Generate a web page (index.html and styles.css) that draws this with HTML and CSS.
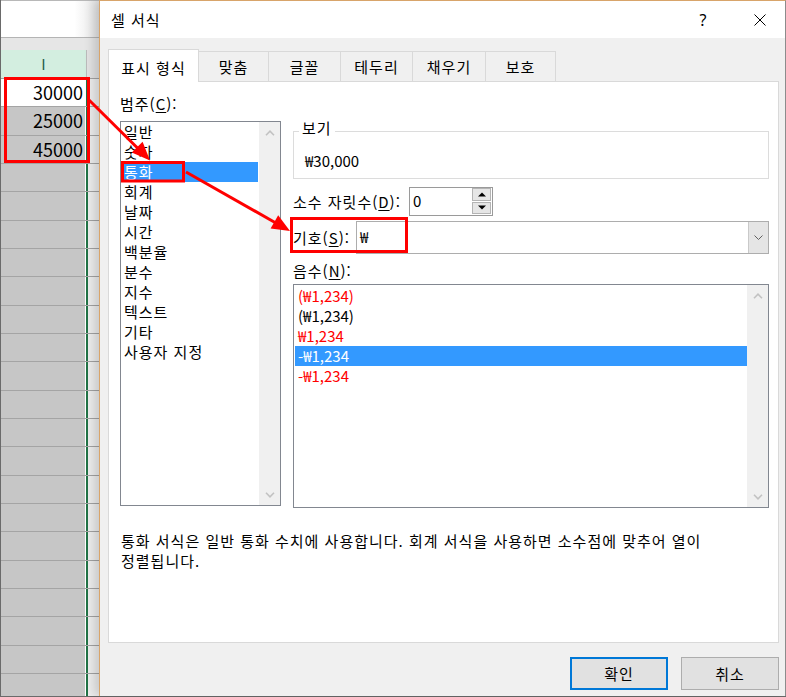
FILE: index.html
```html
<!DOCTYPE html>
<html lang="ko">
<head>
<meta charset="utf-8">
<title>셀 서식</title>
<link rel="stylesheet" href="styles.css">
</head>
<body>
<div class="screen">
  <div class="sheet">
    <div class="sheet-top"></div>
    <div class="sheet-bar"></div>
    <div class="sheet-row head"><div class="cell">I</div><div class="strip"></div></div>
    <div class="sheet-row first"><div class="cell">30000</div><div class="gap"></div><div class="strip"></div></div>
    <div class="sheet-row"><div class="cell">25000</div><div class="gap"></div><div class="strip"></div></div>
    <div class="sheet-row"><div class="cell">45000</div><div class="gap"></div><div class="strip"></div></div>
    <div class="sheet-row"><div class="cell"></div><div class="gap"></div><div class="strip"></div></div>
    <div class="sheet-row"><div class="cell"></div><div class="gap"></div><div class="strip"></div></div>
    <div class="sheet-row"><div class="cell"></div><div class="gap"></div><div class="strip"></div></div>
    <div class="sheet-row"><div class="cell"></div><div class="gap"></div><div class="strip"></div></div>
    <div class="sheet-row"><div class="cell"></div><div class="gap"></div><div class="strip"></div></div>
    <div class="sheet-row"><div class="cell"></div><div class="gap"></div><div class="strip"></div></div>
    <div class="sheet-row"><div class="cell"></div><div class="gap"></div><div class="strip"></div></div>
    <div class="sheet-row"><div class="cell"></div><div class="gap"></div><div class="strip"></div></div>
    <div class="sheet-row"><div class="cell"></div><div class="gap"></div><div class="strip"></div></div>
    <div class="sheet-row"><div class="cell"></div><div class="gap"></div><div class="strip"></div></div>
    <div class="sheet-row"><div class="cell"></div><div class="gap"></div><div class="strip"></div></div>
    <div class="sheet-row"><div class="cell"></div><div class="gap"></div><div class="strip"></div></div>
    <div class="sheet-row"><div class="cell"></div><div class="gap"></div><div class="strip"></div></div>
    <div class="sheet-row"><div class="cell"></div><div class="gap"></div><div class="strip"></div></div>
    <div class="sheet-row"><div class="cell"></div><div class="gap"></div><div class="strip"></div></div>
    <div class="sheet-row"><div class="cell"></div><div class="gap"></div><div class="strip"></div></div>
    <div class="sheet-row"><div class="cell"></div><div class="gap"></div><div class="strip"></div></div>
    <div class="sheet-row"><div class="cell"></div><div class="gap"></div><div class="strip"></div></div>
    <div class="sheet-row"><div class="cell"></div><div class="gap"></div><div class="strip"></div></div>
  </div>

  <div class="dialog">
    <div class="titlebar">
      <span class="title">셀 서식</span>
      <span class="tb-btn help">?</span>
      <span class="tb-btn close">
        <svg width="12" height="12" viewBox="0 0 12 12"><path d="M0.5 0.5 L11.5 11.5 M11.5 0.5 L0.5 11.5" stroke="#000" stroke-width="1" fill="none"/></svg>
      </span>
    </div>

    <div class="dlg-body">
      <div class="tabs">
        <div class="tab active t1">표시 형식</div>
        <div class="tab t2">맞춤</div>
        <div class="tab t3">글꼴</div>
        <div class="tab t4">테두리</div>
        <div class="tab t5">채우기</div>
        <div class="tab t6">보호</div>
      </div>

      <div class="panel">
        <div class="columns">
          <div class="left">
            <div class="label">범주(<u>C</u>):</div>
            <div class="listbox cat">
              <ul class="items">
                <li>일반</li>
                <li>숫자</li>
                <li class="sel">통화</li>
                <li>회계</li>
                <li>날짜</li>
                <li>시간</li>
                <li>백분율</li>
                <li>분수</li>
                <li>지수</li>
                <li>텍스트</li>
                <li>기타</li>
                <li>사용자 지정</li>
              </ul>
              <div class="vscroll">
                <span class="arrow"><svg width="10" height="6" viewBox="0 0 10 6"><polyline points="1,5.2 5,1.2 9,5.2" fill="none" stroke="#c2c2c2" stroke-width="1.6"/></svg></span>
                <span class="arrow"><svg width="10" height="6" viewBox="0 0 10 6"><polyline points="1,0.8 5,4.8 9,0.8" fill="none" stroke="#c2c2c2" stroke-width="1.6"/></svg></span>
              </div>
            </div>
          </div>

          <div class="right">
            <fieldset class="sample">
              <legend>보기</legend>
              <div class="sample-value">₩30,000</div>
            </fieldset>

            <div class="field-row decimals">
              <span class="label dec-label">소수 자릿수(<u>D</u>):</span>
              <div class="spin">
                <span class="spin-value">0</span>
                <div class="spin-btns">
                  <span class="spin-btn"><svg width="8" height="5" viewBox="0 0 8 5"><polygon points="0,4.5 4,0.5 8,4.5" fill="#000"/></svg></span>
                  <span class="spin-btn"><svg width="8" height="5" viewBox="0 0 8 5"><polygon points="0,0.5 4,4.5 8,0.5" fill="#000"/></svg></span>
                </div>
              </div>
            </div>

            <div class="field-row symbol">
              <span class="label sym-label">기호(<u>S</u>):</span>
              <div class="combo">
                <span class="combo-value">₩</span>
                <span class="combo-arrow"><svg width="9" height="5" viewBox="0 0 9 5"><polyline points="0.5,0.5 4.5,4.5 8.5,0.5" fill="none" stroke="#606060" stroke-width="1"/></svg></span>
              </div>
            </div>

            <div class="label neg-label">음수(<u>N</u>):</div>
            <div class="listbox neg">
              <ul class="items">
                <li class="red">(₩1,234)</li>
                <li>(₩1,234)</li>
                <li class="red">₩1,234</li>
                <li class="sel">-₩1,234</li>
                <li class="red">-₩1,234</li>
              </ul>
              <div class="vscroll">
                <span class="arrow"><svg width="10" height="6" viewBox="0 0 10 6"><polyline points="1,5.2 5,1.2 9,5.2" fill="none" stroke="#c2c2c2" stroke-width="1.6"/></svg></span>
                <span class="arrow"><svg width="10" height="6" viewBox="0 0 10 6"><polyline points="1,0.8 5,4.8 9,0.8" fill="none" stroke="#c2c2c2" stroke-width="1.6"/></svg></span>
              </div>
            </div>
          </div>
        </div>

        <p class="desc">통화 서식은 일반 통화 수치에 사용합니다. 회계 서식을 사용하면 소수점에 맞추어 열이<br>정렬됩니다.</p>
      </div>

      <div class="buttons">
        <button class="btn primary">확인</button>
        <button class="btn">취소</button>
      </div>
    </div>
  </div>

  <svg class="annot" width="786" height="697" viewBox="0 0 786 697">
    <g fill="none" stroke="#ff0000" stroke-width="3">
      <rect x="5.5" y="78.5" width="83" height="83"/>
      <rect x="122.5" y="162.5" width="61" height="18.5"/>
      <rect x="291.5" y="218.5" width="115" height="33"/>
      <line x1="89" y1="100" x2="138" y2="148.5"/>
      <line x1="186" y1="172" x2="275" y2="222.5"/>
    </g>
    <g fill="#ff0000">
      <polygon points="150,160.5 131.8,152.6 142.6,141.8"/>
      <polygon points="290,231 270.6,228.6 278.2,215.3"/>
    </g>
  </svg>
</div>
</body>
</html>
```

FILE: styles.css
```css
* { box-sizing: border-box; }

html, body {
  margin: 0;
  padding: 0;
}

body {
  width: 786px;
  height: 697px;
  overflow: hidden;
  background: #f0f0f0;
  font-family: "Noto Sans CJK KR", "Noto Sans", sans-serif;
  color: #000;
}

.screen {
  position: relative;
  display: flex;
  width: 786px;
  height: 697px;
  border-left: 1px solid #6a6a6a;
  border-bottom: 1px solid #6a6a6a;
}

/* ---------- spreadsheet strip ---------- */
.sheet {
  width: 98px;
  flex: none;
  display: flex;
  flex-direction: column;
  overflow: hidden;
  background: #c6c6c6;
}

.sheet-top {
  flex: none;
  height: 38px;
  background: linear-gradient(to right, #fff 75%, #e4e4e4);
  border-top: 1px solid #b8b8b8;
  border-bottom: 1px solid #b4b4b4;
}

.sheet-bar {
  flex: none;
  height: 12px;
  background: #e6e6e6;
}

.sheet-row {
  flex: none;
  display: flex;
  height: 28.33px;
  border-bottom: 1px solid #a4a4a4;
}

.sheet-row .cell {
  width: 84px;
  flex: none;
  text-align: right;
  padding-right: 2px;
  font-size: 18px;
  line-height: 27px;
  background: #c6c6c6;
}

.sheet-row.first .cell { background: #fff; }

.sheet-row .gap {
  width: 3px;
  flex: none;
  background: #fff;
  box-shadow: inset -2px 0 0 #217346;
}

.sheet-row .strip {
  flex: 1;
  background: #eeeeee;
}

.sheet-row.head {
  height: 29px;
  border-bottom: 1px solid #a4a4a4;
}

.sheet-row.head .cell {
  width: 86px;
  background: #d3eee0;
  border-right: 1px solid #bcbcbc;
  text-align: center;
  padding: 0;
  font-size: 15px;
  line-height: 27px;
  color: #1f5f48;
}

.sheet-row.head .strip { background: #e3e3e3; }

/* ---------- dialog ---------- */
.dialog {
  position: relative;
  z-index: 1;
  flex: 1;
  display: flex;
  flex-direction: column;
  background: #f0f0f0;
  border-top: 1px solid #d8a46a;
  border-left: 1px solid #d8a46a;
  border-right: 1px solid #8c8c8c;
  box-shadow: -5px 0 10px rgba(0, 0, 0, 0.16);
}

.titlebar {
  flex: none;
  height: 37px;
  background: #fff;
  display: flex;
  align-items: center;
  padding-left: 11px;
  font-size: 15px;
}

.title {
  flex: 1;
  letter-spacing: 1px;
}

.tb-btn {
  display: flex;
  align-items: center;
  justify-content: center;
  height: 37px;
}

.help {
  width: 40px;
  margin-right: 12px;
  font-family: "Noto Sans", sans-serif;
  font-size: 16px;
}

.close { width: 50px; }

.dlg-body {
  flex: 1;
  display: flex;
  flex-direction: column;
  padding: 11px 6px 0 8px;
}

.tabs {
  flex: none;
  display: flex;
  align-items: flex-end;
  height: 32px;
}

.tab {
  height: 30px;
  margin-left: -1px;
  border: 1px solid #d9d9d9;
  border-bottom: none;
  background: #f0f0f0;
  display: flex;
  align-items: center;
  justify-content: center;
  font-size: 15px;
  letter-spacing: 1px;
}

.tab.active {
  position: relative;
  z-index: 1;
  height: 33px;
  margin-left: 0;
  margin-bottom: -1px;
  padding-top: 2px;
  background: #fff;
}

.t1 { width: 91px; }
.t2 { width: 71px; }
.t3 { width: 73px; }
.t4 { width: 73px; }
.t5 { width: 74px; }
.t6 { width: 71px; }

.panel {
  flex: none;
  height: 562px;
  background: #fff;
  border: 1px solid #d9d9d9;
  padding: 12px 8px 0 11px;
}

.columns {
  display: flex;
  align-items: flex-start;
  gap: 12px;
}

.label {
  font-size: 15px;
  line-height: 20px;
  white-space: nowrap;
  letter-spacing: 1px;
}

.label u { text-underline-offset: 2px; }

.left { width: 161px; flex: none; }

.listbox {
  display: flex;
  background: #fff;
  border: 1px solid #828790;
}

.items {
  flex: 1;
  list-style: none;
  margin: 0;
  padding: 0;
  font-size: 15px;
  line-height: 20px;
}

.items li {
  height: 20px;
  padding-left: 3px;
  white-space: nowrap;
}

.items li.sel {
  background: #3399ff;
  color: #fff;
}

.items li.red { color: #ff0000; }

.vscroll {
  width: 21px;
  flex: none;
  background: #f0f0f0;
  display: flex;
  flex-direction: column;
  justify-content: space-between;
}

.vscroll .arrow {
  height: 21px;
  display: flex;
  align-items: center;
  justify-content: center;
}

.cat {
  height: 385px;
  margin-top: 7px;
}

.cat .items {
  margin-right: 1px;
  letter-spacing: 1px;
}

.right {
  width: 476px;
  flex: none;
  padding-top: 24px;
}

.sample {
  margin: 0;
  min-width: 0;
  padding: 7px 11px 7px;
  border: 1px solid #dcdcdc;
}

.sample legend {
  margin-left: -6px;
  padding: 0 3px 6px;
  font-size: 15px;
  line-height: 20px;
  letter-spacing: 1px;
}

.sample-value {
  font-size: 15px;
  line-height: 20px;
}

.field-row {
  display: flex;
  align-items: center;
}

.decimals {
  margin-top: 8px;
  height: 29px;
}

.dec-label { width: 116px; }

.spin {
  width: 84px;
  height: 29px;
  display: flex;
  border: 1px solid #9a9a9a;
  background: #fff;
}

.spin-value {
  flex: 1;
  padding-left: 3px;
  font-size: 15px;
  line-height: 25px;
}

.spin-btns {
  width: 20px;
  display: flex;
  flex-direction: column;
  gap: 1px;
  padding: 0 1px 1px 0;
}

.spin-btn {
  flex: 1;
  display: flex;
  align-items: center;
  justify-content: center;
  background: #e6e6e6;
  border: 1px solid #b4b4b4;
}

.symbol {
  margin-top: 5px;
  height: 33px;
}

.sym-label { width: 63px; }

.combo {
  flex: 1;
  height: 33px;
  display: flex;
  border: 1px solid #adadad;
  background: #fff;
}

.combo-value {
  flex: 1;
  padding-left: 3px;
  font-size: 15px;
  line-height: 30px;
}

.combo-arrow {
  width: 20px;
  display: flex;
  align-items: center;
  justify-content: center;
  background: #e5e5e5;
  border-left: 1px solid #c9c9c9;
}

.neg-label { margin-top: 7px; }

.neg {
  height: 224px;
  margin-top: 3px;
}

.neg .items {
  margin-left: 1px;
  padding-top: 1px;
}

.desc {
  margin: 23px 0 0 1px;
  font-size: 15px;
  line-height: 20px;
  letter-spacing: 1px;
}

.buttons {
  flex: none;
  display: flex;
  justify-content: flex-end;
  gap: 13px;
  margin-top: 14px;
}

.btn {
  width: 98px;
  height: 33px;
  padding: 0;
  background: #e1e1e1;
  border: 1px solid #adadad;
  font-family: "Noto Sans CJK KR", sans-serif;
  font-size: 15px;
  letter-spacing: 1px;
  color: #000;
}

.btn.primary { border: 2px solid #0078d7; }

/* ---------- annotation overlay ---------- */
.annot {
  position: absolute;
  top: 0;
  left: -1px;
  z-index: 5;
  pointer-events: none;
}
```
